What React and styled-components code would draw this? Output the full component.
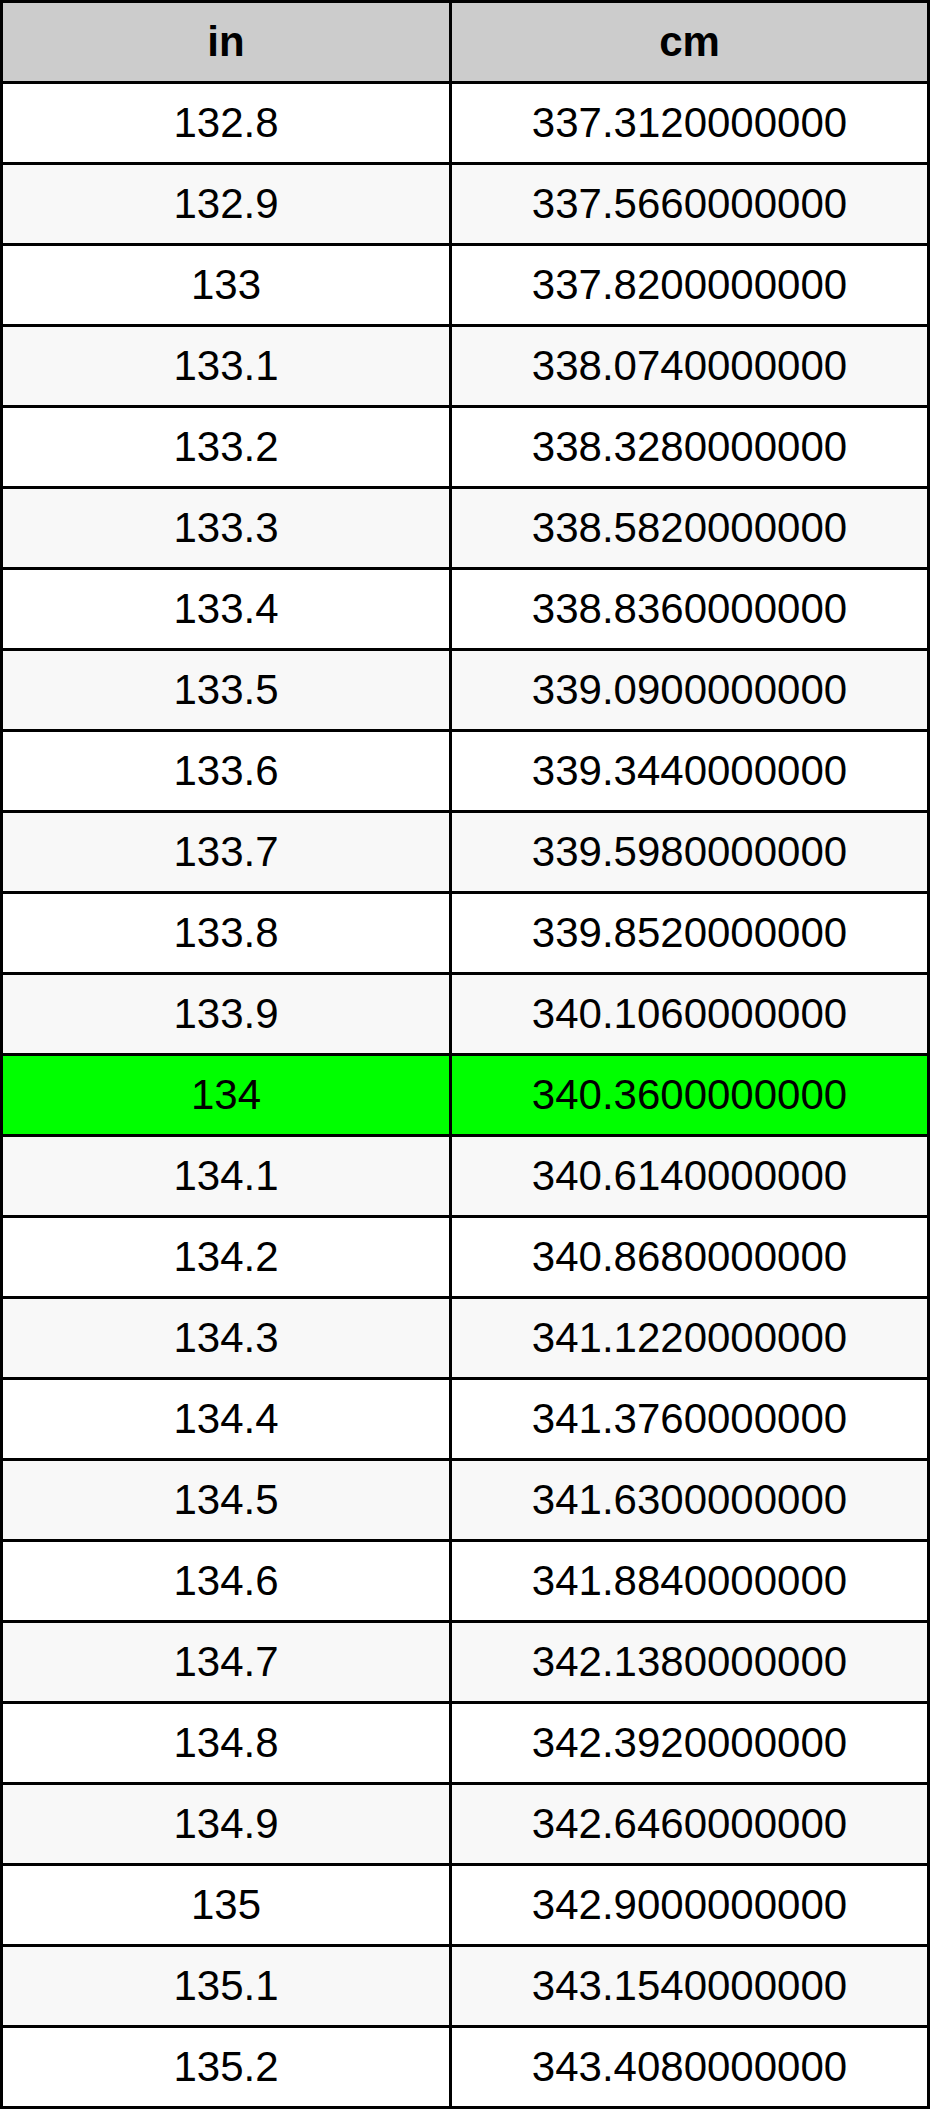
import React from "react";
import styled, { createGlobalStyle } from "styled-components";

const Global = createGlobalStyle`
  html, body { margin: 0; padding: 0; background: #ffffff; }
  body { font-family: "Liberation Sans", Arial, Helvetica, sans-serif; }
`;

const Table = styled.div`
  display: grid;
  grid-template-columns: 446px 475px;
  grid-auto-rows: 78px;
  gap: 3px;
  padding: 3px;
  width: 930px;
  box-sizing: border-box;
  background: #000000;
`;

const Cell = styled.div`
  display: flex;
  align-items: center;
  justify-content: center;
  background: ${(p) => p.$bg};
  color: #000000;
  font-size: 42px;
  font-weight: ${(p) => (p.$head ? 700 : 400)};
  line-height: 1;
`;

const rows = [];
for (let t = 1328; t <= 1352; t++) {
  const inch = t % 10 === 0 ? String(t / 10) : (t / 10).toFixed(1);
  const v = t * 254;
  const whole = Math.floor(v / 1000);
  const frac = String(v % 1000).padStart(3, "0");
  rows.push({ t, inch, cm: `${whole}.${frac}0000000` });
}

export default function App() {
  return (
    <>
      <Global />
      <Table>
        <Cell $head $bg="#cccccc">in</Cell>
        <Cell $head $bg="#cccccc">cm</Cell>
        {rows.map((r, i) => {
          const bg = r.t === 1340 ? "#00ff00" : i % 2 === 1 ? "#f8f8f8" : "#ffffff";
          return (
            <React.Fragment key={r.t}>
              <Cell $bg={bg}>{r.inch}</Cell>
              <Cell $bg={bg}>{r.cm}</Cell>
            </React.Fragment>
          );
        })}
      </Table>
    </>
  );
}
